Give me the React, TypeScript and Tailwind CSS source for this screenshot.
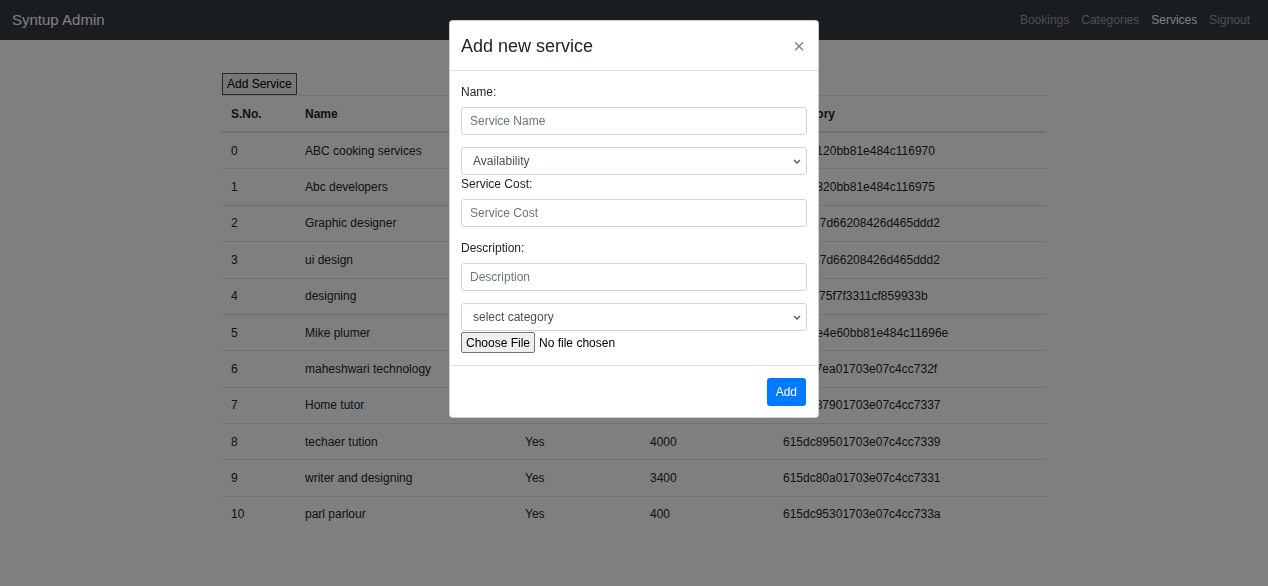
import React from "react";

const services = [
  { name: "ABC cooking services", avail: "Yes", cost: "500", category: "61416120bb81e484c116970" },
  { name: "Abc developers", avail: "Yes", cost: "1200", category: "61416320bb81e484c116975" },
  { name: "Graphic designer", avail: "Yes", cost: "800", category: "6155f37d66208426d465ddd2" },
  { name: "ui design", avail: "Yes", cost: "700", category: "6155f37d66208426d465ddd2" },
  { name: "designing", avail: "Yes", cost: "900", category: "6155fc75f7f3311cf859933b" },
  { name: "Mike plumer", avail: "Yes", cost: "300", category: "61415e4e60bb81e484c11696e" },
  { name: "maheshwari technology", avail: "Yes", cost: "2000", category: "615dc7ea01703e07c4cc732f" },
  { name: "Home tutor", avail: "Yes", cost: "1500", category: "615dc87901703e07c4cc7337" },
  { name: "techaer tution", avail: "Yes", cost: "4000", category: "615dc89501703e07c4cc7339" },
  { name: "writer and designing", avail: "Yes", cost: "3400", category: "615dc80a01703e07c4cc7331" },
  { name: "parl parlour", avail: "Yes", cost: "400", category: "615dc95301703e07c4cc733a" },
];

function Chevron() {
  return (
    <svg width="8" height="5" viewBox="0 0 8 5" className="text-[#555]" aria-hidden="true">
      <polyline points="1,1 4,4 7,1" fill="none" stroke="currentColor" strokeWidth="1.3" />
    </svg>
  );
}

function SelectBox({ label }: { label: string }) {
  return (
    <div className="flex h-[28px] items-center justify-between rounded-[3px] border border-[#ced4da] bg-white pl-[11px] pr-[5px] text-[12px] text-[#495057]">
      <span>{label}</span>
      <Chevron />
    </div>
  );
}

function TextBox({ placeholder }: { placeholder: string }) {
  return (
    <div className="flex h-[28px] items-center rounded-[3px] border border-[#ced4da] bg-white px-[8px] text-[12px] text-[#6c757d]">
      {placeholder}
    </div>
  );
}

export default function App() {
  return (
    <div className="relative h-[586px] overflow-hidden bg-white font-['Segoe_UI','Liberation_Sans',sans-serif] text-[12px] leading-[18px] text-[#212529]">
      <nav className="flex h-[40px] items-center justify-between bg-[#343a40] px-[12px]">
        <span className="text-[15px] text-white">Syntup Admin</span>
        <div className="flex">
          <span className="px-[6px] text-white/50">Bookings</span>
          <span className="px-[6px] text-white/50">Categories</span>
          <span className="px-[6px] text-white">Services</span>
          <span className="px-[6px] text-white/50">Signout</span>
        </div>
      </nav>

      <div className="mx-auto mt-[33px] w-[824px]">
        <button className="h-[22px] border border-[#505050] bg-[#efefef] px-[4px] text-[12px] leading-[18px] text-black">
          Add Service
        </button>
        <table className="w-full border-collapse text-left">
          <thead>
            <tr className="border-t border-[#dee2e6] border-b-2 border-b-[#dee2e6]">
              <th className="w-[74px] px-[9px] py-[8.5px] font-bold">S.No.</th>
              <th className="w-[220px] px-[9px] py-[8.5px] font-bold">Name</th>
              <th className="w-[125px] px-[9px] py-[8.5px] font-bold">Availability</th>
              <th className="w-[133px] px-[9px] py-[8.5px] font-bold">Cost</th>
              <th className="px-[9px] py-[8.5px] font-bold">Category</th>
            </tr>
          </thead>
          <tbody>
            {services.map((s, i) => (
              <tr key={i} className="border-t border-[#dee2e6]">
                <td className="px-[9px] py-[8.7px]">{i}</td>
                <td className="px-[9px] py-[8.7px]">{s.name}</td>
                <td className="px-[9px] py-[8.7px]">{s.avail}</td>
                <td className="px-[9px] py-[8.7px]">{s.cost}</td>
                <td className="px-[9px] py-[8.7px]">{s.category}</td>
              </tr>
            ))}
          </tbody>
        </table>
      </div>

      <div className="fixed inset-0 bg-black/50">
        <div className="mx-auto mt-[20px] w-[370px] rounded-[4px] border border-black/20 bg-white">
          <div className="flex items-start justify-between border-b border-[#dee2e6] pl-[11px] pr-[12px] pt-[12px] pb-[10px]">
            <h4 className="text-[18px] font-medium leading-[27px]">Add new service</h4>
            <span className="mt-[3px] pr-[1px] text-[20px] font-normal leading-[20px] text-black/50">×</span>
          </div>
          <div className="px-[11px] pb-[12px] pt-[12px]">
            <div className="mb-[12px]">
              <label className="mb-[6px] block">Name:</label>
              <TextBox placeholder="Service Name" />
            </div>
            <SelectBox label="Availability" />
            <div className="mb-[12px]">
              <label className="mb-[6px] block">Service Cost:</label>
              <TextBox placeholder="Service Cost" />
            </div>
            <div className="mb-[12px]">
              <label className="mb-[6px] block">Description:</label>
              <TextBox placeholder="Description" />
            </div>
            <SelectBox label="select category" />
            <div className="mt-[1px] flex items-center">
              <span className="flex h-[21px] items-center rounded-[2px] border border-[#767676] bg-[#efefef] px-[4px] text-black">
                Choose File
              </span>
              <span className="ml-[4px] text-black">No file chosen</span>
            </div>
          </div>
          <div className="flex justify-end border-t border-[#dee2e6] px-[12px] pt-[12px] pb-[11px]">
            <button className="h-[28px] rounded-[3px] bg-[#007bff] px-[9px] text-[12px] text-white">Add</button>
          </div>
        </div>
      </div>
    </div>
  );
}
